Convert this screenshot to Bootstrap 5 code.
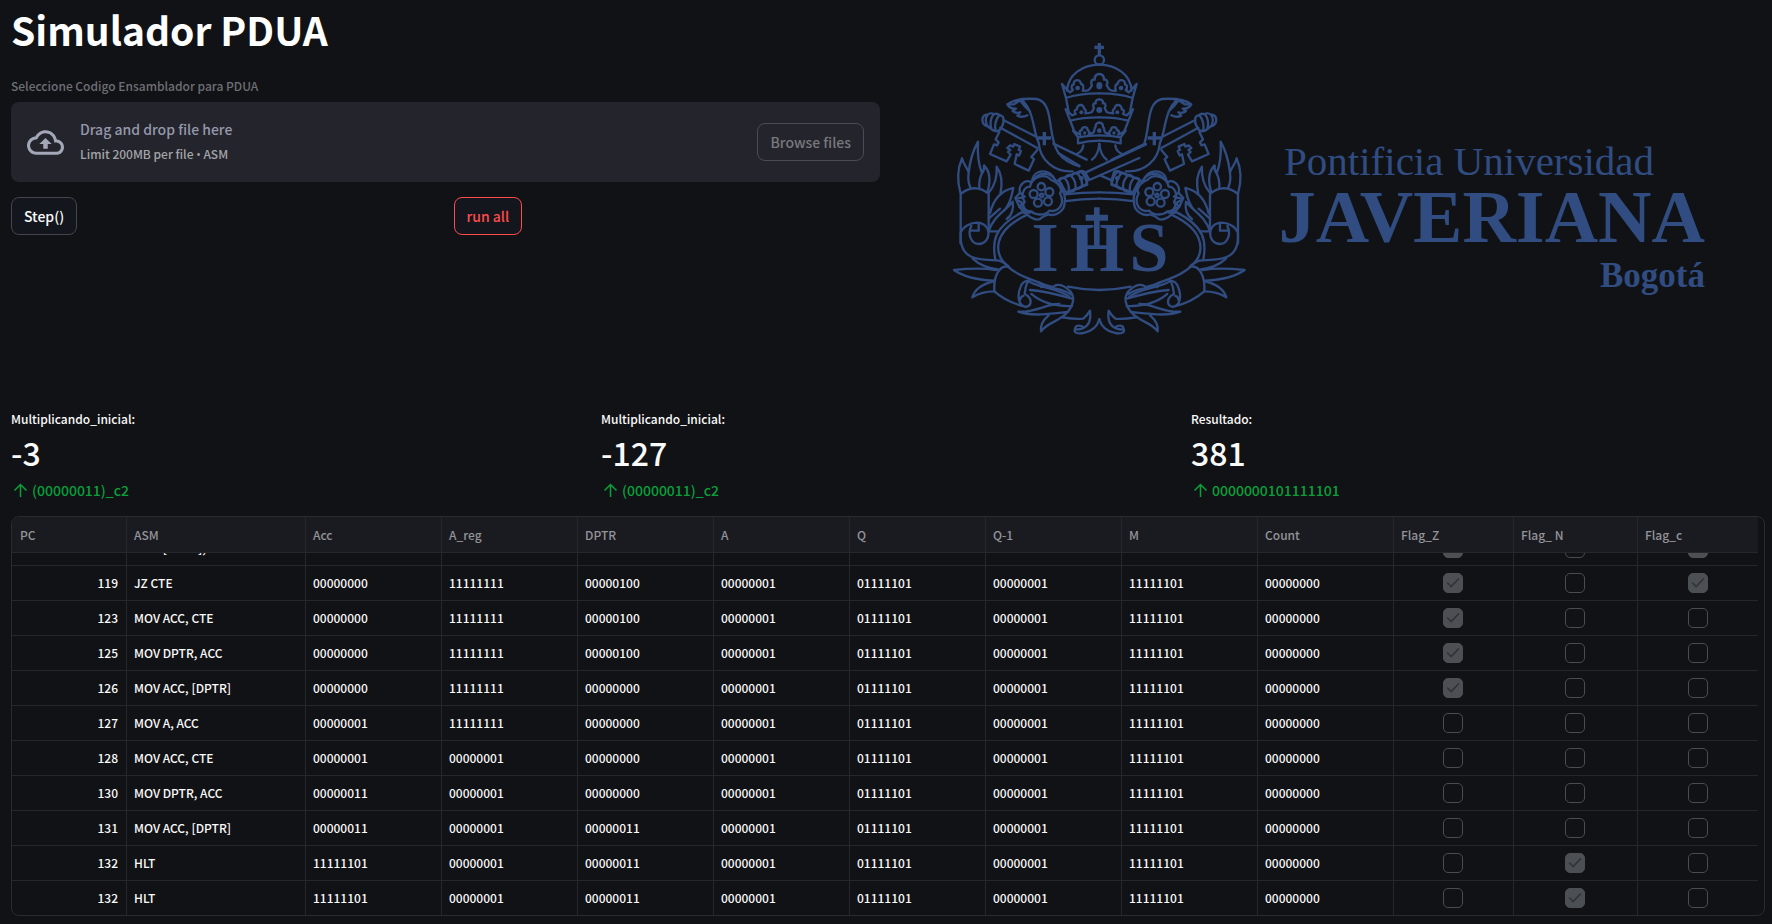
<!DOCTYPE html>
<html lang="es" data-bs-theme="dark">
<head>
<meta charset="utf-8">
<meta name="viewport" content="width=device-width, initial-scale=1">
<title>Simulador PDUA</title>
<link rel="stylesheet" href="https://cdn.jsdelivr.net/npm/bootstrap@5.3.0/dist/css/bootstrap.min.css">
<style>
  body { background: #111216; color: #fafafa; font-family: "Noto Sans CJK SC", "Noto Sans", sans-serif; font-size: 14px; line-height: 22px; }
  .page { padding: 0 7px 8px 11px; }
  .page-title { font-size: 39px; line-height: 48px; font-weight: 700; padding-top: 5px; margin-bottom: 23px; }
  .small-text { font-size: 12px; line-height: 20px; font-weight: 500; }
  .muted { color: #6e6f73; }
  .dropzone { background: #24242c; border-radius: 8px; padding: 15px 16px; margin-top: 6px; }
  .dropzone .cloud { width: 37px; height: 37px; fill: #a3a8b8; }
  .dropzone .hint { color: #9498ab; line-height: 24px; font-weight: 500; }
  .dropzone .limit { color: #a3a4a8; line-height: 25px; }
  .bullet { font-family: "Open Sans", sans-serif; }
  .tool-row { margin-top: 15px; }
  .tool { --bs-btn-bg: #13161d; --bs-btn-color: #fafafa; --bs-btn-border-color: #44464c; --bs-btn-padding-x: 12px; --bs-btn-padding-y: 0; --bs-btn-font-size: 14px; --bs-btn-font-weight: 500; --bs-btn-border-radius: 8px; --bs-btn-line-height: 36px; }
  .tool-active { --bs-btn-color: #ff4b4b; --bs-btn-border-color: #ff4b4b; }
  .tool-muted { --bs-btn-bg: transparent; --bs-btn-color: #77787d; --bs-btn-border-color: #4b4c52; }
  .metric-value { font-size: 32px; line-height: 46px; font-weight: 500; }
  .metric-delta { color: #09a03a; padding: 3px 0 0 2px; line-height: 24px; font-weight: 500; }
  .metric-delta svg { width: 15px; height: 15px; fill: none; stroke: currentColor; stroke-width: 1.5; }
  .grid-frame { margin-top: 14px; border: 1px solid #2a2b2f; border-radius: 8px; padding-right: 6px; overflow: hidden; }
  .grid-scroll { max-height: 398px; overflow-y: auto; scrollbar-width: none; }
  .grid-scroll::-webkit-scrollbar { display: none; }
  .trace { table-layout: fixed; width: 100%; border-collapse: separate; border-spacing: 0; font-size: 12px; font-weight: 500; line-height: 20px; }
  .trace th, .trace td { padding: 0 8px 0 7px; border-right: 1px solid #26272b; border-bottom: 1px solid #26272b; white-space: nowrap; overflow: hidden; }
  .trace th { position: sticky; top: 0; z-index: 1; height: 36px; background: #1a1b20; color: #939498; font-weight: 500; }
  .trace td { height: 35px; }
  .trace tr > :last-child { border-right: 0; }
  .trace tr > :first-child { padding-left: 8px; }
  .trace tbody tr:last-child td { height: 34px; border-bottom: 0; }
  .trace .form-check-input { width: 20px; height: 20px; margin: 0; display: block; border: 1px solid #4b4c50; border-radius: 5px; background-color: transparent; opacity: 1; }
  .trace .form-check-input:checked { background-color: #4c4f53; border-color: #4c4f53; background-image: url("data:image/svg+xml,%3Csvg xmlns='http://www.w3.org/2000/svg' viewBox='0 0 20 20'%3E%3Cpath d='M4 10l4 4L16 5.500' fill='none' stroke='%23303338' stroke-width='1.8' stroke-linecap='round'/%3E%3C/svg%3E"); }
  .crest { display: block; width: 100%; height: auto; }
  .crest text { font-family: "Liberation Serif", serif; fill: #304c80; }
  .crest .line { fill: none; stroke: #304c80; stroke-width: 7; stroke-linejoin: round; stroke-linecap: round; }
  .crest .solid { fill: #304c80; }
  .crest .cover { fill: #111216; }
</style>
</head>
<body>
<main class="page">
  <div class="row gx-3">
    <section class="col-6">
      <h1 class="page-title">Simulador PDUA</h1>
      <label class="small-text muted d-block" for="asm-file">Seleccione Codigo Ensamblador para PDUA</label>
      <div class="dropzone d-flex align-items-center">
        <svg class="cloud flex-shrink-0" viewBox="0 0 24 24" aria-hidden="true"><path d="M19.35 10.04C18.67 6.59 15.64 4 12 4 9.11 4 6.6 5.64 5.35 8.04 2.34 8.36 0 10.91 0 14c0 3.31 2.69 6 6 6h13c2.76 0 5-2.24 5-5 0-2.64-2.05-4.78-4.65-4.96zM19 18H6c-2.21 0-4-1.79-4-4 0-2.05 1.53-3.76 3.56-3.97l1.07-.11.5-.95C8.08 7.14 9.94 6 12 6c2.62 0 4.88 1.86 5.39 4.43l.3 1.5 1.53.11c1.56.1 2.78 1.41 2.78 2.96 0 1.65-1.35 3-3 3zM8 13h2.55v3h2.9v-3H16l-4-4z"/></svg>
        <div class="d-flex flex-column ms-3 me-auto">
          <span class="hint">Drag and drop file here</span>
          <span class="small-text limit">Limit 200MB per file <span class="bullet">•</span> ASM</span>
        </div>
        <input class="d-none" type="file" id="asm-file" accept=".asm">
        <button type="button" class="btn tool tool-muted" id="browse">Browse files</button>
      </div>
      <div class="row gx-3 tool-row">
        <div class="col-6"><button type="button" class="btn tool">Step()</button></div>
        <div class="col-6"><button type="button" class="btn tool tool-active">run all</button></div>
      </div>
    </section>
    <section class="col-6">
      <svg class="crest" viewBox="896 0 869 409" role="img" aria-label="Pontificia Universidad Javeriana Bogotá">
        <defs>
          <g id="crest-half" class="line">
            <!-- tiara -->
            <path d="M381 182C384 132 430 104 478 104M366 162L378 204L386 246M366 162L382 180L390 187L399 180C391 172 396 163 401 164C399 146 423 146 423 162C430 162 432 174 428 182Q441 184 448 178L456 166C450 155 456 147 464 149C464 138 470 132 478 132M378 204C410 192 445 190 478 190"/>
            <path d="M377 238L404 306M377 238L396 256L407 252C401 244 405 238 411 238C409 222 433 220 432 236C438 238 439 246 436 250Q448 250 456 246L462 234C456 224 462 218 467 220C466 211 472 208 478 208M392 272C420 264 445 262 478 262"/>
            <path d="M399 302L421 314C417 305 420 300 425 301C426 288 443 288 443 301C449 302 449 310 446 313L460 308C466 304 460 296 467 291C466 282 472 278 478 278M399 302L414 322V340M414 322C440 317 455 316 478 316M414 340C440 333 455 332 478 332"/>
            <path d="M430 346C428 360 422 367 410 372M478 342C476 366 468 380 456 389"/>
            <!-- stole -->
            <path d="M202 223C225 205 260 205 290 207C328 214 328 268 334 300C342 355 354 390 418 409M244 208C284 244 278 300 296 338C300 390 342 428 398 424M202 223L222 223L240 211M202 223Q210 237 228 236L218 243Q230 252 241 247L232 257Q246 264 262 256M240 211L252 226L270 244"/>
            <!-- key head and bit -->
            <path d="M190 270L286 319M181 293L292 354M340 341L440 389M356 370L418 407"/>
            <path d="M143 254C120 252 124 288 143 289C136 278 136 264 143 254C150 248 158 250 161 253C150 265 150 285 154 297L143 289M161 253Q172 249 178 255C166 270 164 290 167 303Q158 302 154 297M178 255Q188 258 190 264C194 280 180 308 167 303"/>
            <path d="M178 306L167 328L176 337L171 346L162 343L150 372L200 394L212 374L204 366L211 360L202 354L210 346L220 350L223 342L240 350L236 360L243 363L237 377L230 373L224 402L266 422L282 388L274 381L292 360"/>
            <!-- torch and flames -->
            <path d="M62 492C90 470 120 470 146 492V602M62 492V638M62 492C50 450 55 410 66 385C70 405 83 412 86 428C90 390 100 360 114 335C112 370 114 400 126 430Q134 420 132 406C150 424 152 454 142 486M86 428Q82 454 92 475M126 430Q116 450 118 474"/>
            <path d="M146 488C164 468 172 440 170 410C184 430 188 460 181 492M150 550C160 508 186 482 220 474C214 496 215 515 194 540M146 604C160 560 190 548 218 515C222 540 217 555 200 567M146 566L180 536M148 604L174 604"/>
            <path d="M62 608C70 588 92 578 112 578C158 580 154 642 116 642C88 640 84 606 94 588M94 602H116V580M62 630C66 668 86 686 134 689L178 692C190 696 198 702 206 709M62 608V640"/>
            <!-- lower leaves and ribbon -->
            <path d="M98 686C115 702 140 714 174 718M42 720C80 716 130 714 168 720M42 720C75 744 120 750 160 752M97 802C104 778 126 762 162 754M97 802Q124 784 164 784"/>
            <path d="M204 710C180 706 160 734 163 784C190 808 222 822 258 831C232 826 232 794 242 770Q248 754 264 752M204 710C234 740 276 748 298 758C306 762 308 770 304 772M264 752C290 774 345 770 388 800M264 752Q256 770 254 792C276 802 278 826 258 831M250 798Q242 800 240 810"/>
            <path d="M338 775C344 760 366 762 382 776C410 796 404 832 366 862M338 775Q366 776 394 794M270 780Q320 784 396 806M274 792C304 818 350 830 396 828M235 845C278 850 325 820 358 822M235 845C274 860 326 852 384 846M303 904C300 884 314 866 326 856M303 904C326 876 344 880 370 858M306 764Q332 770 338 775"/>
            <path d="M368 862Q404 868 430 866Q442 856 450 842C454 870 448 888 426 896Q408 902 406 894C408 884 424 886 430 892M406 894C398 908 412 914 434 908C460 902 472 890 478 868"/>
            <!-- oval -->
            <path d="M250 545C160 590 156 636 166 688M262 554C150 606 164 676 204 710M298 758Q318 768 338 771M374 493Q425 487 478 487M370 514Q425 506 478 506M384 770Q430 780 478 780"/>
          </g>
          <g id="crest-rose" class="line">
            <path class="cover" d="M282 448A38 38 0 0 1 347 452L366 478Q378 498 374 516C374 545 346 560 326 553Q314 556 306 562Q296 576 272 562L250 544L238 530L226 504L240 488C234 462 258 448 272 456Z"/>
            <path d="M277 447C285 418 328 414 346 450M270 470C276 440 314 428 334 450C360 460 368 480 360 490C376 520 358 548 328 542C314 560 282 554 274 544C250 544 246 522 254 516C240 494 252 470 270 470M240 488L254 500L228 507L248 520L238 530L256 538L250 548L270 548"/>
            <circle cx="304" cy="470" r="11"/><circle cx="328" cy="486" r="12"/><circle cx="324" cy="514" r="12"/><circle cx="294" cy="518" r="12"/><circle cx="281" cy="492" r="12"/><circle cx="305" cy="496" r="5"/>
            <path class="cover" d="M356 450L420 424Q434 428 442 464L378 488Z"/>
            <path d="M356 450Q366 462 370 478M354 452Q364 440 374 444Q390 462 386 486M374 444Q386 430 394 438Q410 456 406 478M394 438Q404 424 414 432Q428 450 426 468M386 486Q402 486 406 478Q420 476 426 468Q440 466 442 454L434 426Q420 418 414 432"/>
          </g>
        </defs>
        <g transform="translate(940 30) scale(.3333)">
          <use href="#crest-half"/>
          <use href="#crest-half" transform="translate(956 0) scale(-1 1)"/>
          <use href="#crest-rose"/>
          <use href="#crest-rose" transform="translate(956 0) scale(-1 1)"/>
          <path class="cover" d="M436 428L620 342L604 386L448 450Z"/>
          <path class="line" d="M436 428L618 343M448 450L598 384M436 428L448 450M480 436L518 452"/>
          <circle class="line" cx="478" cy="90" r="14"/>
          <path class="solid" d="M473 39h10v8h9v10h-9v18h-10v-18h-10v-10h10zM308 306h10v13h15v10h-15v17h-10v-17h-15v-10h15zM638 306h10v13h15v10h-15v17h-10v-17h-15v-10h15z"/>
          <g class="solid"><ellipse cx="478" cy="167" rx="9" ry="11"/><circle cx="413" cy="174" r="7"/><circle cx="543" cy="174" r="7"/><circle cx="478" cy="240" r="9"/><circle cx="424" cy="247" r="6"/><circle cx="532" cy="247" r="6"/><circle cx="478" cy="302" r="7"/><circle cx="434" cy="309" r="5"/><circle cx="522" cy="309" r="5"/><circle cx="424" cy="445" r="7"/><circle cx="532" cy="445" r="7"/></g>
          <path class="solid" d="M462 532h17v22h25v18h-25v84h-17v-84h-25v-18h25z"/>
        </g>
        <g font-size="70" font-weight="700" text-anchor="middle">
          <text x="1045" y="271">I</text><text x="1097" y="271">H</text><text x="1149" y="271">S</text>
        </g>
        <text x="1284" y="175" font-size="41">Pontificia Universidad</text>
        <text x="1705" y="242" font-size="74" font-weight="700" text-anchor="end">JAVERIANA</text>
        <text x="1705" y="287" font-size="35" font-weight="700" text-anchor="end">Bogotá</text>
      </svg>
    </section>
  </div>

  <div class="row gx-3">
    <div class="col-4">
      <div class="small-text">Multiplicando_inicial:</div>
      <div class="metric-value">-3</div>
      <div class="metric-delta d-flex align-items-center gap-1"><svg viewBox="0 0 15 15" aria-hidden="true"><path d="M7.500 14V1.500M1.500 7.500l6-6 6 6"/></svg>(00000011)_c2</div>
    </div>
    <div class="col-4">
      <div class="small-text">Multiplicando_inicial:</div>
      <div class="metric-value">-127</div>
      <div class="metric-delta d-flex align-items-center gap-1"><svg viewBox="0 0 15 15" aria-hidden="true"><path d="M7.500 14V1.500M1.500 7.500l6-6 6 6"/></svg>(00000011)_c2</div>
    </div>
    <div class="col-4">
      <div class="small-text">Resultado:</div>
      <div class="metric-value">381</div>
      <div class="metric-delta d-flex align-items-center gap-1"><svg viewBox="0 0 15 15" aria-hidden="true"><path d="M7.500 14V1.500M1.500 7.500l6-6 6 6"/></svg>0000000101111101</div>
    </div>
  </div>

  <div class="grid-frame">
    <div class="grid-scroll" id="trace-scroll">
      <table class="trace">
        <colgroup><col style="width:115px"><col style="width:179px"><col span="8" style="width:136px"><col style="width:120px"><col style="width:124px"><col style="width:120px"></colgroup>
        <thead><tr><th>PC</th><th>ASM</th><th>Acc</th><th>A_reg</th><th>DPTR</th><th>A</th><th>Q</th><th>Q-1</th><th>M</th><th>Count</th><th>Flag_Z</th><th>Flag_ N</th><th>Flag_c</th></tr></thead>
        <tbody id="trace-body"></tbody>
      </table>
    </div>
  </div>
</main>
<script src="https://cdn.jsdelivr.net/npm/bootstrap@5.3.0/dist/js/bootstrap.bundle.min.js"></script>
<script>
  // pc, instruction, Acc, A_reg, DPTR, flags Z N C
  const steps = [
    [118, 'MOV [DPTR], ACC', '00000000', '11111111', '00000100', '101'],
    [119, 'JZ CTE', '00000000', '11111111', '00000100', '101'],
    [123, 'MOV ACC, CTE', '00000000', '11111111', '00000100', '100'],
    [125, 'MOV DPTR, ACC', '00000000', '11111111', '00000100', '100'],
    [126, 'MOV ACC, [DPTR]', '00000000', '11111111', '00000000', '100'],
    [127, 'MOV A, ACC', '00000001', '11111111', '00000000', '000'],
    [128, 'MOV ACC, CTE', '00000001', '00000001', '00000000', '000'],
    [130, 'MOV DPTR, ACC', '00000011', '00000001', '00000000', '000'],
    [131, 'MOV ACC, [DPTR]', '00000011', '00000001', '00000011', '000'],
    [132, 'HLT', '11111101', '00000001', '00000011', '010'],
    [132, 'HLT', '11111101', '00000001', '00000011', '010']
  ];
  const registers = ['00000001', '01111101', '00000001', '11111101', '00000000'];
  const flagNames = ['Flag_Z', 'Flag_N', 'Flag_c'];
  document.getElementById('trace-body').innerHTML = steps.map(([pc, asm, acc, areg, dptr, flags]) =>
    `<tr><td class="text-end">${pc}</td>` +
    [asm, acc, areg, dptr, ...registers].map(v => `<td>${v}</td>`).join('') +
    [...flags].map((f, i) => `<td><div class="d-flex justify-content-center"><input class="form-check-input" type="checkbox" disabled aria-label="${flagNames[i]}"${f === '1' ? ' checked' : ''}></div></td>`).join('') +
    '</tr>').join('');
  const scroller = document.getElementById('trace-scroll');
  scroller.scrollTop = scroller.scrollHeight;
  document.getElementById('browse').addEventListener('click', () => document.getElementById('asm-file').click());
</script>
</body>
</html>
